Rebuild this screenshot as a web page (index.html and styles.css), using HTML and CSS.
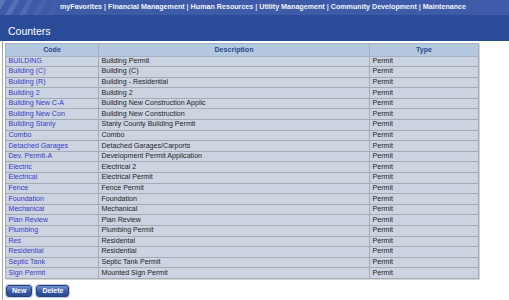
FILE: index.html
```html
<!DOCTYPE html>
<html>
  <head>
    <title>Counters</title>
    <link rel="stylesheet" href="styles.css">
  </head>

  <body>
    <div class="nav">
      <a href="#">myFavorites</a> | <a href="#">Financial Management</a> | <a href="#">Human Resources</a> | <a href="#">Utility Management</a> | <a href="#">Community Development</a> | <a href="#">Maintenance</a>
    </div>
    <div class="title">Counters</div>

    <div class="content">
      <table class="grid">
        <colgroup>
          <col class="col-code">
          <col class="col-desc">
          <col class="col-type">
        </colgroup>
        <thead>
          <tr><th>Code</th><th>Description</th><th>Type</th></tr>
        </thead>
        <tbody>
          <tr><td><a href="#">BUILDING</a></td><td>Building Permit</td><td>Permit</td></tr>
          <tr><td><a href="#">Building (C)</a></td><td>Building (C)</td><td>Permit</td></tr>
          <tr><td><a href="#">Building (R)</a></td><td>Building - Residential</td><td>Permit</td></tr>
          <tr><td><a href="#">Building 2</a></td><td>Building 2</td><td>Permit</td></tr>
          <tr><td><a href="#">Building New C-A</a></td><td>Building New Construction Applic</td><td>Permit</td></tr>
          <tr><td><a href="#">Building New Con</a></td><td>Building New Construction</td><td>Permit</td></tr>
          <tr><td><a href="#">Building Stanly</a></td><td>Stanly County Building Permit</td><td>Permit</td></tr>
          <tr><td><a href="#">Combo</a></td><td>Combo</td><td>Permit</td></tr>
          <tr><td><a href="#">Detached Garages</a></td><td>Detached Garages/Carports</td><td>Permit</td></tr>
          <tr><td><a href="#">Dev. Permit-A</a></td><td>Development Permit Application</td><td>Permit</td></tr>
          <tr><td><a href="#">Electric</a></td><td>Electrical 2</td><td>Permit</td></tr>
          <tr><td><a href="#">Electrical</a></td><td>Electrical Permit</td><td>Permit</td></tr>
          <tr><td><a href="#">Fence</a></td><td>Fence Permit</td><td>Permit</td></tr>
          <tr><td><a href="#">Foundation</a></td><td>Foundation</td><td>Permit</td></tr>
          <tr><td><a href="#">Mechanical</a></td><td>Mechanical</td><td>Permit</td></tr>
          <tr><td><a href="#">Plan Review</a></td><td>Plan Review</td><td>Permit</td></tr>
          <tr><td><a href="#">Plumbing</a></td><td>Plumbing Permit</td><td>Permit</td></tr>
          <tr><td><a href="#">Res</a></td><td>Residental</td><td>Permit</td></tr>
          <tr><td><a href="#">Residential</a></td><td>Residential</td><td>Permit</td></tr>
          <tr><td><a href="#">Septic Tank</a></td><td>Septic Tank Permit</td><td>Permit</td></tr>
          <tr><td><a href="#">Sign Permit</a></td><td>Mounted Sign Permit</td><td>Permit</td></tr>
        </tbody>
      </table>

      <div class="actions">
        <button type="button">New</button>
        <button type="button">Delete</button>
      </div>
    </div>
  </body>
</html>
```

FILE: styles.css
```css
body {
  margin: 0;
  background-color: #ffffff;
  font-family: "Liberation Sans", Arial, sans-serif;
  overflow: hidden;
}

.nav {
  height: 15px;
  line-height: 15px;
  padding-left: 60px;
  font-size: 7.15px;
  font-weight: bold;
  color: #dfe5f3;
  white-space: nowrap;
  background:
    linear-gradient(to right, rgba(61, 91, 169, 0) 0, #3d5ba9 62px),
    repeating-linear-gradient(120deg, rgba(255, 255, 255, 0.16) 0 5px, rgba(255, 255, 255, 0) 5px 12px),
    #3d5ba9;
}

.nav a {
  color: #f2f5fb;
  text-decoration: none;
}

.title {
  height: 26px;
  box-sizing: border-box;
  padding: 10px 0 0 8px;
  font-size: 10.5px;
  color: #ffffff;
  background-color: #2a4b98;
}

.content {
  margin-left: 2px;
  padding: 1.5px 0 0 2px;
  border-left: 1px solid #a9a9a9;
  height: 258px;
}

.grid {
  table-layout: fixed;
  border-collapse: collapse;
  width: 473px;
  font-size: 7.1px;
  color: #1e1e1e;
  box-shadow: 1px 1px 0 #d6d6d6;
}

.col-code {
  width: 93px;
}

.col-desc {
  width: 271px;
}

.col-type {
  width: 109px;
}

.grid th {
  height: 12px;
  padding: 0;
  background-color: #b4c8e0;
  color: #2b4a8b;
  font-weight: bold;
  border: 1px solid #a3b3c6;
}

.grid td {
  height: 9.6px;
  padding: 0 0 0 2.5px;
  line-height: 9px;
  background-color: #ccd4e2;
  border: 1px solid #a6abb3;
  white-space: nowrap;
  overflow: hidden;
}

.grid td a {
  color: #3a3ac4;
  text-decoration: none;
}

.actions {
  margin-top: 6px;
  display: flex;
  gap: 4px;
  padding-left: 1px;
}

.actions button {
  height: 12px;
  padding: 0 5px;
  border: 1px solid #23407f;
  border-radius: 3px;
  background: linear-gradient(#7390d0, #3a5aa6 55%, #2c4b95);
  color: #ffffff;
  font-family: "Liberation Sans", Arial, sans-serif;
  font-size: 7px;
  font-weight: bold;
  line-height: 10px;
  box-shadow: 0 0 0 1px #c3cde3;
}
```
